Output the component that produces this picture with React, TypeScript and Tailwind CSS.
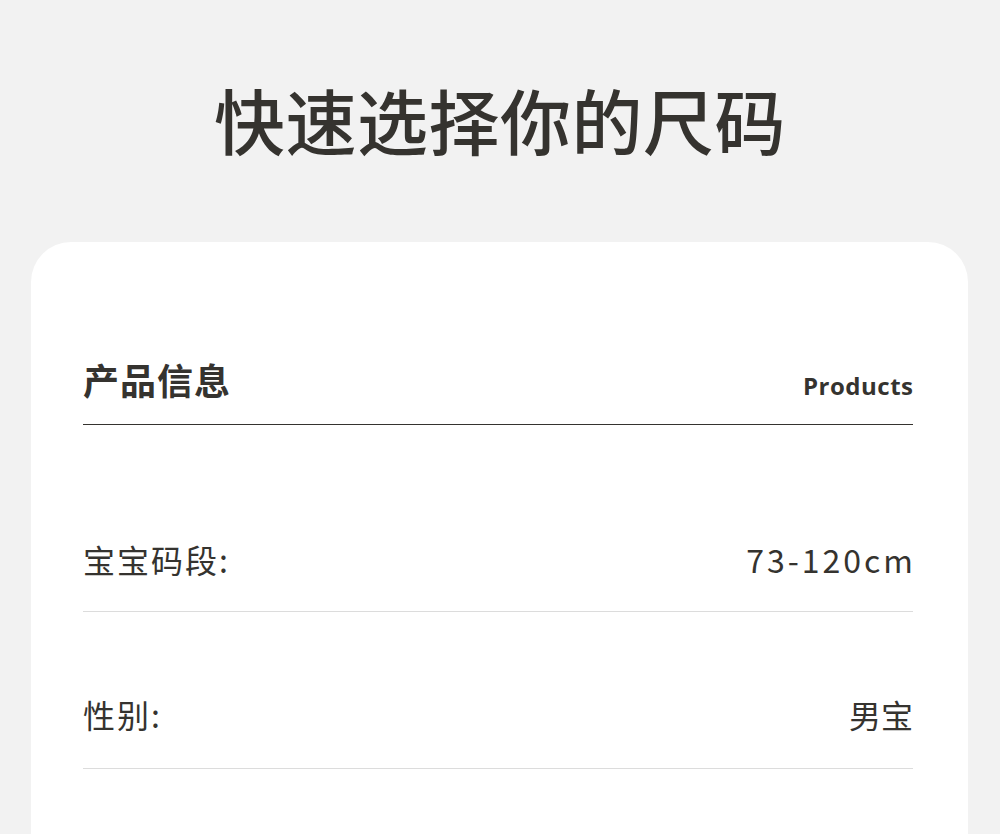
export default function App() {
  const cjk = { fontFamily: '"Noto Sans CJK SC", "Noto Sans", sans-serif' };
  return (
    <div className="min-h-[834px] w-[1000px] bg-[#f2f2f2] overflow-hidden" style={cjk}>
      <div className="pt-[78px] h-[242px]">
        <h1 className="text-center text-[71px] leading-[80px] font-medium text-[#35332f] tracking-[0.5px]">
          快速选择你的尺码
        </h1>
      </div>
      <div className="ml-[31px] mr-[32px] bg-white rounded-t-[40px] pl-[52px] pr-[55px] pt-[115px] pb-[80px]">
        <div className="flex items-end justify-between pb-[23px] border-b-[1.5px] border-[#35332f]">
          <div className="text-[36px] leading-[44px] font-bold text-[#35332f] tracking-[1px]">产品信息</div>
          <div className="text-[24px] leading-[30px] font-bold text-[#35332f] tracking-[0.5px] mr-[-0.5px]" style={{ fontFamily: '"Open Sans", "Noto Sans", sans-serif' }}>
            Products
          </div>
        </div>
        <div className="flex items-center justify-between pt-[114px] pb-[32px] border-b border-[#dcdcdc]">
          <div className="text-[32px] leading-[40px] text-[#35332f] tracking-[2px]">宝宝码段:</div>
          <div className="text-[32px] leading-[40px] text-[#35332f] tracking-[3px] mr-[-3px]">73-120cm</div>
        </div>
        <div className="flex items-center justify-between pt-[82px] pb-[34px] border-b border-[#dcdcdc]">
          <div className="text-[32px] leading-[40px] text-[#35332f] tracking-[2px]">性别:</div>
          <div className="text-[32px] leading-[40px] text-[#35332f]">男宝</div>
        </div>
      </div>
    </div>
  );
}
